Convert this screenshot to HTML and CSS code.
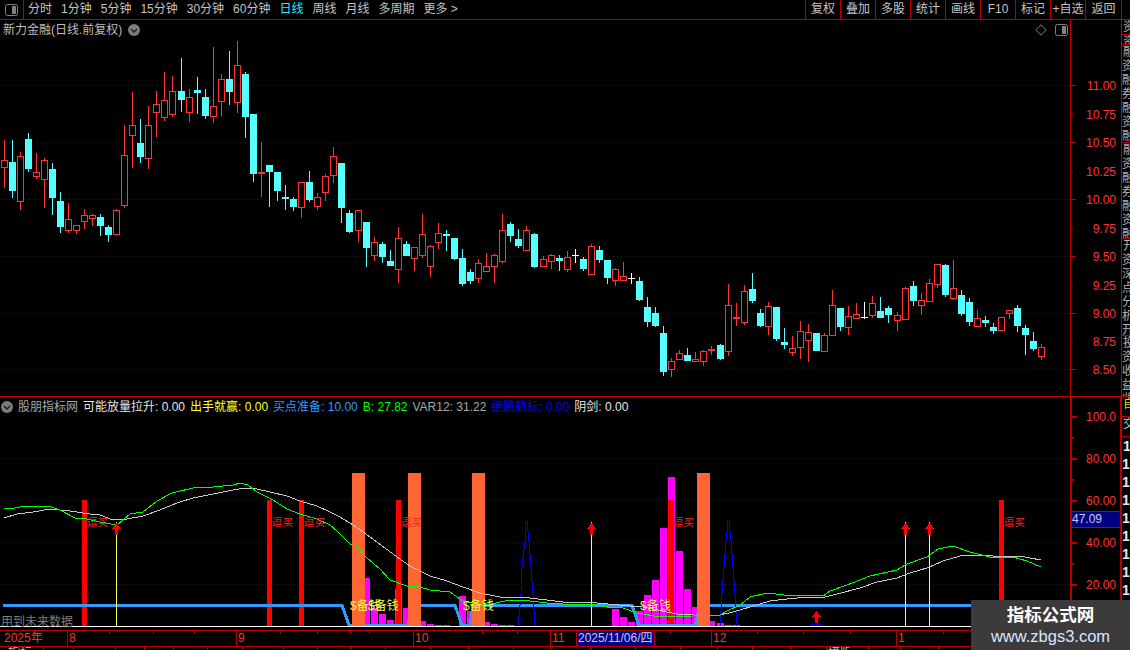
FILE: index.html
```html
<!DOCTYPE html>
<html lang="zh-CN">
<head>
<meta charset="utf-8">
<title>新力金融 日线</title>
<link rel="stylesheet" href="styles.css">
</head>
<body>
<div class="app">
  <header class="toolbar">
    <div class="layout-btn"><svg class="box-icon" viewBox="0 0 13 12"><rect class="box-o" x="0.5" y="0.5" width="12" height="11" rx="2"/><rect class="box-i" x="7" y="2" width="4" height="8"/></svg></div>
    <nav class="tabs">
      <span>分时</span><span>1分钟</span><span>5分钟</span><span>15分钟</span><span>30分钟</span><span>60分钟</span><span class="on">日线</span><span>周线</span><span>月线</span><span>多周期</span><span>更多 &gt;</span>
    </nav>
    <div class="actions">
      <span class="act">复权</span><span class="act">叠加</span><span class="act">多股</span><span class="act">统计</span><span class="act">画线</span><span class="act">F10</span><span class="act">标记</span><span class="act">+自选</span><span class="act last">返回</span>
    </div>
  </header>

  <div class="desk">
    <div class="upper">
      <section class="pane upper-pane">
        <svg id="priceChart" class="canvas"></svg>
        <div class="title-row">
          <span>新力金融(日线.前复权)</span>
          <svg class="chev" viewBox="0 0 12 12"><circle class="chev-bg" cx="6" cy="6" r="6"/><path class="chev-ln" d="M3 5l3 3 3-3"/></svg>
        </div>
        <div class="pane-icons">
          <svg class="diamond" viewBox="0 0 12 12"><path class="dia" d="M6 .8L11.2 6 6 11.2.8 6z"/></svg>
          <svg class="box-icon" viewBox="0 0 13 12"><rect class="box-o" x="0.5" y="0.5" width="12" height="11" rx="2"/><rect class="box-i" x="7" y="2" width="4" height="8"/></svg>
        </div>
      </section>
      <aside class="axis upper-axis"><svg id="priceAxis" class="canvas"></svg></aside>
    </div>

    <div class="lower">
      <section class="pane lower-pane">
        <svg id="indicator" class="canvas"></svg>
        <div class="legend">
          <svg class="chev" viewBox="0 0 12 12"><circle class="chev-bg" cx="6" cy="6" r="6"/><path class="chev-ln" d="M3 5l3 3 3-3"/></svg>
          <span class="l-gray">股朋指标网</span>
          <span class="l-white">可能放量拉升: 0.00</span>
          <span class="l-yellow">出手就赢: 0.00</span>
          <span class="l-sky">买点准备: 10.00</span>
          <span class="l-green">B: 27.82</span>
          <span class="l-gray">VAR12: 31.22</span>
          <span class="l-blue">绝路航标: 0.00</span>
          <span class="l-white">阴剑: 0.00</span>
        </div>
        <div class="note">用到未来数据</div>
      </section>
      <aside class="axis lower-axis">
        <svg id="indAxis" class="canvas"></svg>
        <div class="value-tag">47.09</div>
      </aside>
    </div>

    <div class="dates">
      <svg id="dateTicks" class="canvas"></svg>
      <span class="d d-y">2025年</span><span class="d d-8">8</span><span class="d d-9">9</span><span class="d d-10">10</span><span class="d d-11">11</span><span class="d d-now">2025/11/06/四</span><span class="d d-gap"></span><span class="d d-12">12</span><span class="d d-1">1</span>
    </div>
    <div class="strip">
      <svg id="stripTicks" class="canvas"></svg>
      <span class="s-a">指标</span><span class="s-b">模版</span>
    </div>
  </div>

  <aside class="side">
    <div class="sec h15">资</div>
    <div class="sec h10">资</div>
    <div class="sec h98">融资融券融资融券融资融</div>
    <div class="sec h96">融资融券融资融券融资融</div>
    <div class="sec h97">开资深点分析开资深点分</div>
    <div class="sec h61">投资收益收</div>
    <div class="sec h20 sec-y">自</div>
    <div class="sec h20">交</div>
    <div class="ones">1 1 1 1 1 1 1 1 1 1 1 1</div>
  </aside>

  <div class="stamp">
    <div class="stamp-t">指标公式网</div>
    <div class="stamp-u">www.zbgs3.com</div>
  </div>
</div>
<script src="chart.js"></script>
</body>
</html>
```
FILE: styles.css
```css
* { box-sizing: border-box; }
html, body { margin: 0; padding: 0; background: #000; }
body {
  font-family: "Liberation Sans", "Noto Sans CJK SC", sans-serif;
  font-size: 12px;
  color: #c4c4c4;
}
.app { position: relative; width: 1130px; height: 650px; overflow: hidden; background: #000; display: grid; grid-template-columns: 1122px 8px; grid-template-rows: 20px 630px; }

.toolbar { grid-column: 1 / 3; display: flex; align-items: center; height: 20px; border-bottom: 1px solid #b80000; padding-right: 8px; }
.layout-btn { width: 24px; height: 19px; border-right: 1px solid #b80000; display: flex; align-items: center; justify-content: center; }
.box-icon { width: 13px; height: 12px; display: block; }
.box-o { fill: none; stroke: #808080; }
.box-i { fill: #808080; }
.tabs { display: flex; gap: 9px; padding-left: 4px; line-height: 19px; white-space: nowrap; }
.tabs .on { color: #22eeff; }
.actions { margin-left: auto; display: flex; height: 19px; }
.act { width: 35px; text-align: center; line-height: 19px; border-left: 1px solid #b80000; white-space: nowrap; }
.act.last { width: 37px; border-right: 1px solid #b80000; }

.desk { display: flex; flex-direction: column; width: 1122px; height: 630px; }
.upper { display: flex; height: 377px; border-bottom: 1px solid #c80000; }
.lower { display: flex; height: 233px; }
.pane { position: relative; width: 1070px; overflow: hidden; }
.axis { position: relative; width: 52px; }
.upper-axis { border-left: 1px solid #c00000; border-right: 1px solid #c00000; }
.lower-axis { border-left: 2px solid #b80000; border-right: 2px solid #b80000; }
.canvas { position: absolute; left: 0; top: 0; width: 100%; height: 100%; display: block; shape-rendering: crispEdges; }

.title-row { position: relative; display: flex; align-items: center; gap: 6px; padding: 3px 0 0 3px; line-height: 14px; color: #bdbdbd; }
.chev { width: 12px; height: 12px; display: block; flex: none; shape-rendering: auto; }
.chev-bg { fill: #7c7c7c; }
.chev-ln { fill: none; stroke: #1c1c1c; stroke-width: 1.4; }
.pane-icons { position: absolute; top: 4px; right: 2px; display: flex; align-items: center; gap: 8px; }
.diamond { width: 12px; height: 12px; display: block; shape-rendering: auto; }
.dia { fill: none; stroke: #808080; }

.legend { position: relative; display: flex; align-items: center; gap: 5px; padding: 2px 0 0 1px; line-height: 16px; white-space: nowrap; }
.l-gray { color: #a8a8a8; }
.l-white { color: #e6e6e6; }
.l-yellow { color: #ffff20; }
.l-sky { color: #3399ff; }
.l-green { color: #00ff00; }
.l-blue { color: #0000ff; }
.note { position: absolute; left: 1px; bottom: 1px; color: #7e7e7e; line-height: 14px; }
.value-tag { position: absolute; left: 0; right: 0; top: 114px; height: 17px; background: #000080; border-top: 1px solid #b80000; border-bottom: 1px solid #b80000; color: #c8c8ff; line-height: 15px; }

.dates { position: relative; display: flex; height: 17px; border-top: 1px solid #b80000; border-bottom: 1px solid #b80000; color: #ff3232; line-height: 15px; }
.d { position: relative; flex: none; padding-left: 1px; border-left: 1px solid #b80000; white-space: nowrap; }
.d-y { width: 67px; border-left: 0; padding-left: 4px; }
.d-8 { width: 169px; }
.d-9 { width: 177px; }
.d-10 { width: 137px; }
.d-11 { width: 26px; }
.d-now { width: 78px; background: #000080; color: #c8c8ff; }
.d-gap { width: 57px; }
.d-12 { width: 185px; }
.d-1 { width: 226px; }

.strip { position: relative; display: flex; height: 3px; overflow: hidden; line-height: 13px; }
.s-a { position: relative; margin-left: 8px; }
.s-b { position: relative; margin-left: 796px; color: #55eeff; }

.side { width: 8px; height: 630px; overflow: hidden; color: #b4b4b4; }
.sec { width: 8px; overflow: hidden; border-bottom: 1px solid #b80000; line-height: 14px; word-break: break-all; white-space: normal; }
.sec-y { color: #dddd00; }
.h15 { height: 15px; }
.h10 { height: 10px; }
.h98 { height: 98px; }
.h96 { height: 96px; }
.h97 { height: 97px; }
.h61 { height: 61px; }
.h20 { height: 20px; }
.sec, .ones { text-indent: 1px; }
.ones { width: 8px; font-weight: 700; font-size: 14px; line-height: 18px; color: #e8e8e8; }

.stamp { position: absolute; right: 0; bottom: 0; width: 159px; height: 50px; background: #3c3a3a; text-align: center; padding-top: 1px; }
.stamp-t { font-family: "Noto Sans CJK SC", sans-serif; font-size: 17.5px; font-weight: 700; line-height: 26px; color: #fff; }
.stamp-u { font-size: 16.5px; line-height: 18px; color: #d6e8ff; }

.k-red { fill: #ff3333; }
.k-cyan { fill: #55ffff; }
.k-white { fill: #ffffff; }
.k-hollow { fill: #000; stroke: #ff3333; stroke-width: 1; }
.grid { stroke: #8c0000; stroke-width: 1; stroke-dasharray: 1 3; }
.tick { stroke: #c00000; stroke-width: 1; }
.tick2 { stroke: #b80000; stroke-width: 2; }
.ax-t { fill: #ff3232; font-size: 12px; text-anchor: end; shape-rendering: auto; }
.b-mag { fill: #ff00ff; }
.b-red { fill: #ff0000; }
.b-org { fill: #ff6633; }
.ln-blue { fill: none; stroke: #3399ff; stroke-width: 3; }
.ln-gray { fill: none; stroke: #c8c8c8; stroke-width: 1; }
.ln-green { fill: none; stroke: #00ff00; stroke-width: 1; }
.ln-spike { fill: none; stroke: #0000ff; stroke-width: 1; }
.ln-yellow { fill: #ffff55; }
.ln-white { fill: #ffffff; }
.b-navy { fill: #0000cc; }
.lab-red { fill: #ff2222; font-size: 10.5px; }
.lab-yel { fill: #e8ff4a; font-size: 12px; }
```
FILE: chart.js
```js
(function () {
  // k-line data: type, high, body top, body bottom, low (read in 1/3 pixel from origin y0)
  var k = [
    [40, 'r300,361,383,444 c300,366,453,474 r336,349,485,510 c279,297,387,396 r339,397,410,417 r354,361,419,504 c369,387,474,525 c456,483,561,579 r489,538,572,579 r556,556,572,582 r507,526,545,567 r522,526,536,558 c522,531,558,588 c555,561,585,606 r508,511,584,584 r255,346,497,504 r156,256,287,384 c237,309,351,369 r198,256,356,387 r153,193,218,291 r96,181,233,243 r108,154,224,231 c54,153,180,216 r147,172,218,246 c111,150,159,222 c147,171,228,237 r21,199,230,249 r102,118,185,228 c33,117,156,195 r3,76,188,219 c96,102,231,294 c222,222,402,426 r306,397,402,471 c375,375,396,501 c396,396,453,483 c435,471,477,510 c471,477,501,513 r427,427,503,534 c393,426,480,486 r459,472,500,510 r402,409,458,483 r321,349,407,429 c369,369,504,549 c510,519,576,580'],
    [200, 'r30,31,92,126 c66,66,144,201 r111,127,167,183 c126,132,171,189 c150,183,198,198 r81,115,209,249 c123,132,168,168 r141,142,176,213 r42,103,169,174 r135,139,200,231 r69,100,128,147 c90,102,108,153 c114,114,177,180 c147,174,252,258 c207,216,243,252 r177,190,236,249 r159,199,215,215 r162,166,200,249 r42,91,186,189 c66,72,108,126 c87,117,138,144 r78,91,152,152 c99,102,201,204 r168,178,200,200 r162,166,185,207 c165,174,183,213 r153,172,209,216 w147,165,168,189 c171,177,207,213 r132,139,224,224 c138,150,180,189 c180,180,234,252 r204,208,242,258 r186,229,242,242 w219,233,235,252 c231,243,300,303 c291,321,366,381 c321,339,378,381 c378,399,516,528 r474,484,509,531 r450,460,479,479 c444,465,483,483 r456,478,485,485'],
    [250, 'r300,304,335,348 r288,297,304,315 c282,285,327,330 r102,166,307,318 r159,201,207,228 r105,124,218,225 c69,117,153,159 c177,189,228,231 r156,169,230,255 c171,171,267,273 c234,276,285,297 r258,295,308,318 r213,244,293,327 r222,247,272,336 c249,249,303,303 r249,256,305,305 r120,166,257,257 c174,174,231,243 r168,199,233,255 r159,192,206,206 w156,201,204,207 r138,160,197,204 c141,183,204,204 c168,174,195,219 r186,196,212,243 r111,115,209,209 c93,108,153,168 r129,151,167,195 r87,100,155,155 r43,43,104,114 c42,45,135,141 r30,115,147,150 c120,135,192,198 c144,156,216,228 r180,205,230,230 c198,210,219,231 c219,231,243,252 r200,202,242,242 r180,181,193,207 c165,174,228,246 c225,234,255,315 c246,273,297,303 r282,292,320,330']
  ];

  function col(i) { return 4 + 8 * i + Math.floor((i + 0.5) / 22.2); }
  function rect(c, x, y, w, h) { return '<rect class="' + c + '" x="' + x + '" y="' + y + '" width="' + w + '" height="' + h + '"/>'; }
  function line(c, x1, y1, x2, y2) { return '<line class="' + c + '" x1="' + x1 + '" y1="' + y1 + '" x2="' + x2 + '" y2="' + y2 + '"/>'; }
  function poly(c, pts) { return '<polyline class="' + c + '" points="' + pts.map(function (p) { return p[0] + ',' + p[1]; }).join(' ') + '"/>'; }
  function text(c, x, y, s) { return '<text class="' + c + '" x="' + x + '" y="' + y + '">' + s + '</text>'; }
  function setup(id, x, y, w, h, body) {
    var el = document.getElementById(id);
    el.setAttribute('viewBox', x + ' ' + y + ' ' + w + ' ' + h);
    el.innerHTML = body;
  }

  // ---- price pane
  var s = '';
  [85, 142, 199, 256, 313, 369].forEach(function (y) { s += line('grid', 1, y + 0.5, 1070, y + 0.5); });
  var idx = 0;
  k.forEach(function (g) {
    var y0 = g[0];
    g[1].split(' ').forEach(function (row) {
      var t = row.charAt(0), v = row.slice(1).split(',').map(function (n) { return Math.round(y0 + n / 3); });
      var x = col(idx++), hi = v[0], top = v[1], bot = v[2], lo = v[3];
      var cls = t === 'r' ? 'k-red' : t === 'c' ? 'k-cyan' : 'k-white';
      s += rect(cls, x, hi, 1, Math.max(lo - hi, 1));
      if (t === 'w') { s += rect(cls, x - 3, top, 7, 1); }
      else if (t === 'c' || bot - top < 3) { s += rect(cls, x - 3, top, 7, Math.max(bot - top, 2)); }
      else { s += rect('k-hollow', x - 2.5, top + 0.5, 6, bot - top - 1); }
    });
  });
  setup('priceChart', 0, 20, 1070, 376, s);

  // ---- price axis
  var a = '';
  [[85, '11.00', 1], [114, '10.75'], [142, '10.50', 1], [171, '10.25'], [199, '10.00', 1], [228, '9.75'], [256, '9.50', 1], [285, '9.25'], [313, '9.00', 1], [341, '8.75'], [369, '8.50', 1]].forEach(function (r) {
    a += line('tick', 1071, r[0] + 0.5, r[2] ? 1076 : 1073, r[0] + 0.5);
    a += text('ax-t', 1116, r[0] + 5, r[1]);
  });
  setup('priceAxis', 1071, 20, 50, 376, a);

  // ---- indicator pane
  var b = '';
  [458, 500, 542, 584].forEach(function (y) { b += line('grid', 1, y + 0.5, 1070, y + 0.5); });
  [[365, 5, 578], [371, 7, 608], [379, 7, 614], [387, 7, 620], [395, 7, 589], [403, 5, 608], [421, 5, 621], [427, 7, 624], [435, 7, 625], [443, 7, 625], [459, 7, 596], [467, 5, 611], [485, 5, 622], [491, 7, 624], [499, 7, 625], [507, 7, 625], [612, 7, 609], [620, 7, 617], [628, 7, 622], [636, 7, 611], [644, 7, 595], [652, 7, 580], [660, 7, 528], [668, 7, 477], [676, 7, 551], [684, 7, 589], [692, 5, 607], [710, 5, 621], [717, 7, 623], [725, 7, 625], [733, 7, 625]].forEach(function (m) {
    b += rect('b-mag', m[0], m[2], m[1], 626 - m[2]);
  });
  [[82, 5], [267, 5], [299, 5], [396, 5], [668, 6], [999, 5]].forEach(function (r) { b += rect('b-red', r[0], 500, r[1], 126); });
  b += poly('ln-blue', [[3, 605.5], [342, 605.5], [349, 625], [408, 625], [412, 605.5], [455, 605.5], [462, 625], [470, 625], [473, 605.5], [632, 605.5], [639, 625], [695, 625], [700, 605.5], [1000, 605.5]]);
  [[352, 13], [408, 13], [472, 13], [697, 13]].forEach(function (r) { b += rect('b-org', r[0], 473, r[1], 153); });

  function spike(cx) {
    var o = cx - 590;
    return poly('ln-spike', [[565, 467], [572, 372], [577, 292], [584, 212], [589, 153], [592, 153], [597, 212], [603, 292], [609, 372], [615, 467]].map(function (p) {
      return [Math.round(330 + (p[0] + o) / 3), Math.round(470 + p[1] / 3)];
    }));
  }
  b += spike(590) + spike(1195);

  [116, 591, 905, 929].forEach(function (x) { b += rect('ln-yellow', x, 522, 1, 104); });

  function curve(groups) {
    var pts = [];
    groups.forEach(function (g) {
      g[1].split(' ').forEach(function (p) {
        var v = p.split(',');
        pts.push([Math.round(g[0] + v[0] / 3), Math.round(470 + v[1] / 3)]);
      });
    });
    return pts;
  }
  b += poly('ln-gray', curve([
    [0, '12,143 50,133 100,125 150,118 210,122 270,131 300,135 340,149 380,148 430,138 480,120 530,100 580,85 640,72 700,60 735,55 770,58 810,65 860,78 900,93 950,108 990,127'],
    [330, '30,142 70,165 100,185 140,215 200,262 240,288 300,318 350,333 400,352 450,368 510,382 600,385 700,395 800,400 900,407 940,412'],
    [660, '50,432 100,436 180,436 220,425 270,410 330,393 380,387 440,382 495,380 530,372 600,355 650,337 710,325 750,310 800,295 850,272 900,257 950,256 1000,259 1080,259 1110,265 1143,271']
  ]));
  b += poly('ln-green', curve([
    [0, '12,115 30,118 60,111 120,107 145,108 180,120 225,143 260,147 300,155 350,165 390,133 430,125 470,92 515,70 590,52 640,50 700,44 720,40 745,45 770,65 820,90 860,118 900,133 950,148 990,165'],
    [330, '20,182 60,222 80,230 110,265 150,298 180,330 230,347 270,352 300,360 360,365 400,392 470,405 510,395 540,391 600,392 650,398 700,402 800,405 830,412 880,415 920,428'],
    [660, '0,440 100,437 180,435 200,422 240,405 270,382 320,368 400,378 440,375 490,378 510,362 560,345 630,318 710,300 740,283 800,262 835,238 880,229 930,245 990,262 1060,262 1100,272 1143,292']
  ]));

  function arrow(x, top) {
    return '<path class="b-red" d="M' + (x + 0.5) + ' ' + top + 'L' + (x + 5) + ' ' + (top + 6) + 'H' + (x + 2) + 'V' + (top + 12) + 'H' + (x - 1) + 'V' + (top + 6) + 'H' + (x - 4) + 'Z"/>';
  }
  [116, 591, 905, 929].forEach(function (x) { b += arrow(x, 523); });
  b += rect('b-navy', 810, 624, 13, 2) + arrow(816, 611);
  b += rect('ln-white', 0, 626, 1070, 1);

  [87, 272, 304, 401, 673, 1004].forEach(function (x) { b += text('lab-red', x, 526, '逗买'); });
  [350, 368, 463, 640].forEach(function (x) { b += text('lab-yel', x, 610, '$备钱'); });
  setup('indicator', 0, 397, 1070, 233, b);

  // ---- indicator axis
  var c = '';
  [[416, '100.0', 1], [437], [458, '80.00', 1], [479], [500, '60.00', 1], [542, '40.00', 1], [563], [584, '20.00', 1], [605]].forEach(function (r) {
    c += line('tick2', 1072, r[0] + 0.5, r[2] ? 1077 : 1074, r[0] + 0.5);
    if (r[1]) c += text('ax-t', 1116, r[0] + 5, r[1]);
  });
  setup('indAxis', 1072, 397, 48, 233, c);

  // ---- ticks under the panes
  var d = '';
  [109, 153, 194, 280, 317, 350, 369, 482, 517, 632, 670, 757, 803, 850, 943].forEach(function (x) { d += line('tick', x + 0.5, 0, x + 0.5, 3); });
  setup('dateTicks', 0, 0, 1122, 15, d);
  var e = '';
  [43, 73, 115, 144, 173, 207, 242, 283, 317, 350, 385, 430, 468, 513, 550, 590, 635, 680, 717, 752, 790, 826, 868, 900, 938].forEach(function (x) { e += line('tick', x + 0.5, 0, x + 0.5, 3); });
  setup('stripTicks', 0, 0, 1122, 3, e);
})();
```
